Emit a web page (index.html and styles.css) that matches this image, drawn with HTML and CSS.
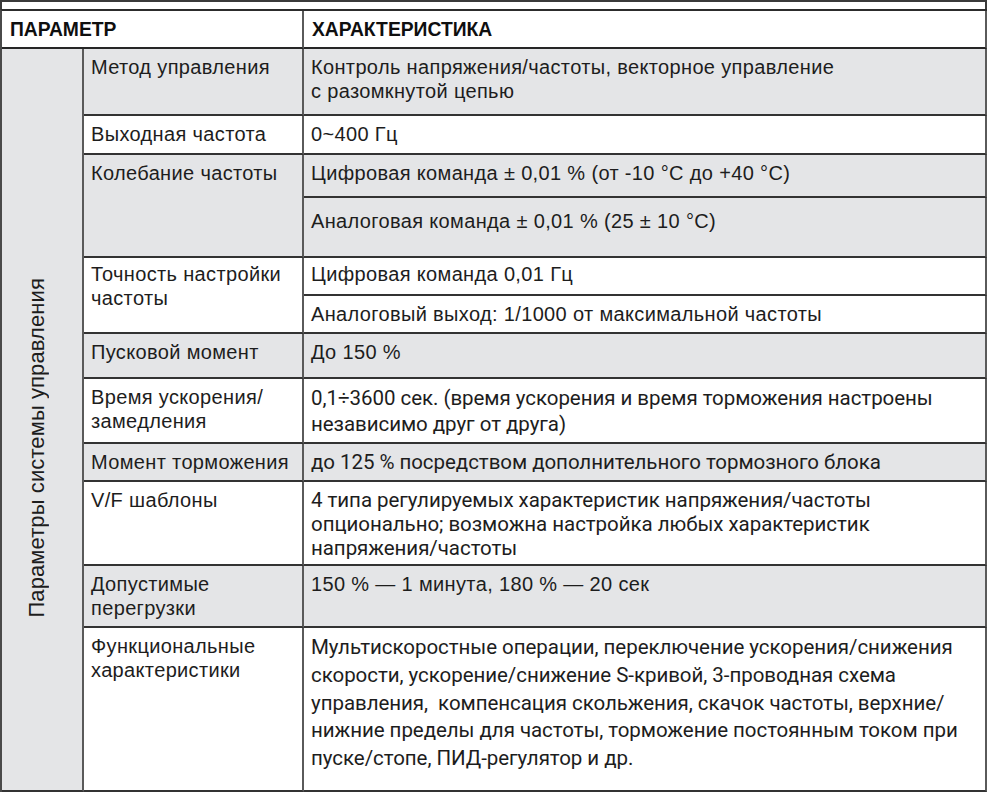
FILE: index.html
```html
<!DOCTYPE html>
<html lang="ru">
<head>
<meta charset="utf-8">
<title>Параметры системы управления</title>
<link rel="stylesheet" href="styles.css">
</head>
<body>
<div class="prev"></div>
<table class="spec">
  <colgroup><col class="c1"><col class="c2"><col class="c3"></colgroup>
  <thead>
    <tr class="r-head">
      <th colspan="2">ПАРАМЕТР</th>
      <th>ХАРАКТЕРИСТИКА</th>
    </tr>
  </thead>
  <tbody>
    <tr class="r-metod gray">
      <td class="group" rowspan="12"><span class="vtext">Параметры системы управления</span></td>
      <td class="p">Метод управления</td>
      <td class="v">Контроль напряжения/частоты, векторное управление<br>с разомкнутой цепью</td>
    </tr>
    <tr class="r-out">
      <td class="p">Выходная частота</td>
      <td class="v">0~400 Гц</td>
    </tr>
    <tr class="r-kol1 gray">
      <td class="p" rowspan="2">Колебание частоты</td>
      <td class="v">Цифровая команда ± 0,01 % (от -10 °C до +40 °C)</td>
    </tr>
    <tr class="r-kol2 gray">
      <td class="v v-low">Аналоговая команда ± 0,01 % (25 ± 10 °C)</td>
    </tr>
    <tr class="r-toch1">
      <td class="p p-high" rowspan="2">Точность настройки<br>частоты</td>
      <td class="v v-high">Цифровая команда 0,01 Гц</td>
    </tr>
    <tr class="r-toch2">
      <td class="v">Аналоговый выход: 1/1000 от максимальной частоты</td>
    </tr>
    <tr class="r-pusk gray">
      <td class="p">Пусковой момент</td>
      <td class="v">До 150 %</td>
    </tr>
    <tr class="r-time">
      <td class="p">Время ускорения/<br>замедления</td>
      <td class="v cond lh26">0,1÷3600 сек. (время ускорения и время торможения настроены<br>независимо друг от друга)</td>
    </tr>
    <tr class="r-brake gray">
      <td class="p">Момент торможения</td>
      <td class="v cond">до 125 % посредством дополнительного тормозного блока</td>
    </tr>
    <tr class="r-vf">
      <td class="p">V/F шаблоны</td>
      <td class="v cond">4 типа регулируемых характеристик напряжения/частоты<br>опционально; возможна настройка любых характеристик<br>напряжения/частоты</td>
    </tr>
    <tr class="r-over gray">
      <td class="p">Допустимые<br>перегрузки</td>
      <td class="v">150 % — 1 минута, 180 % — 20 сек</td>
    </tr>
    <tr class="r-func">
      <td class="p">Функциональные<br>характеристики</td>
      <td class="v cond lh28">Мультискоростные операции, переключение ускорения/снижения<br>скорости, ускорение/снижение S-кривой, 3-проводная схема<br>управления,&nbsp; компенсация скольжения, скачок частоты, верхние/<br>нижние пределы для частоты, торможение постоянным током при<br>пуске/стопе, ПИД-регулятор и др.</td>
    </tr>
  </tbody>
</table>
</body>
</html>
```

FILE: styles.css
```css
html, body {
  margin: 0;
  padding: 0;
  background: #ffffff;
}

body {
  width: 987px;
  height: 794px;
  overflow: hidden;
  font-family: "Liberation Sans", Arial, sans-serif;
  color: #1d1d1d;
}

.prev {
  height: 7px;
  border-style: solid;
  border-color: #3a3a3a;
  border-width: 2px 2px 0 2px;
}

.spec {
  width: 987px;
  table-layout: fixed;
  border-collapse: separate;
  border-spacing: 0;
  border-top: 2px solid #2c2c2c;
  border-left: 2px solid #4a4a4a;
}

.c1 { width: 82px; }
.c2 { width: 220px; }

.spec th,
.spec td {
  border-right: 2px solid #5a5a5a;
  border-bottom: 2px solid #333333;
  padding: 0 7px;
  text-align: left;
  white-space: nowrap;
}

.spec th {
  font-weight: bold;
  font-size: 19.3px;
  line-height: 22px;
  vertical-align: middle;
  padding-left: 8px;
  padding-top: 1px;
  border-bottom-color: #262626;
  color: #0f0f0f;
}

.spec td {
  font-size: 20px;
  line-height: 24px;
  letter-spacing: 0.35px;
  vertical-align: top;
  padding-top: 6px;
}

.gray td,
.spec td.group {
  background: #e4e5e7;
}

.spec td.group {
  vertical-align: middle;
  text-align: center;
  padding: 62px 10px 0 0;
  letter-spacing: 0;
}

.vtext {
  display: inline-block;
  writing-mode: vertical-rl;
  transform: rotate(180deg);
  font-size: 22px;
  line-height: 24px;
  letter-spacing: 0.1px;
}

.spec td.v-low { padding-top: 11px; }
.spec td.v-high,
.spec td.p-high { padding-top: 4px; }

.spec td.cond {
  font-family: Roboto, "Liberation Sans", sans-serif;
  font-size: 20.5px;
  letter-spacing: -0.05px;
}

.spec td.lh26 { line-height: 26px; }
.spec td.lh28 { line-height: 27.8px; }

.r-head { height: 38px; }
.r-metod { height: 67px; }
.r-out { height: 39px; }
.r-kol1 { height: 43px; }
.r-kol2 { height: 60px; }
.r-toch1 { height: 38px; }
.r-toch2 { height: 38px; }
.r-pusk { height: 45px; }
.r-time { height: 65px; }
.r-brake { height: 38px; }
.r-vf { height: 84px; }
.r-over { height: 62px; }
.r-func { height: 164px; }
```
